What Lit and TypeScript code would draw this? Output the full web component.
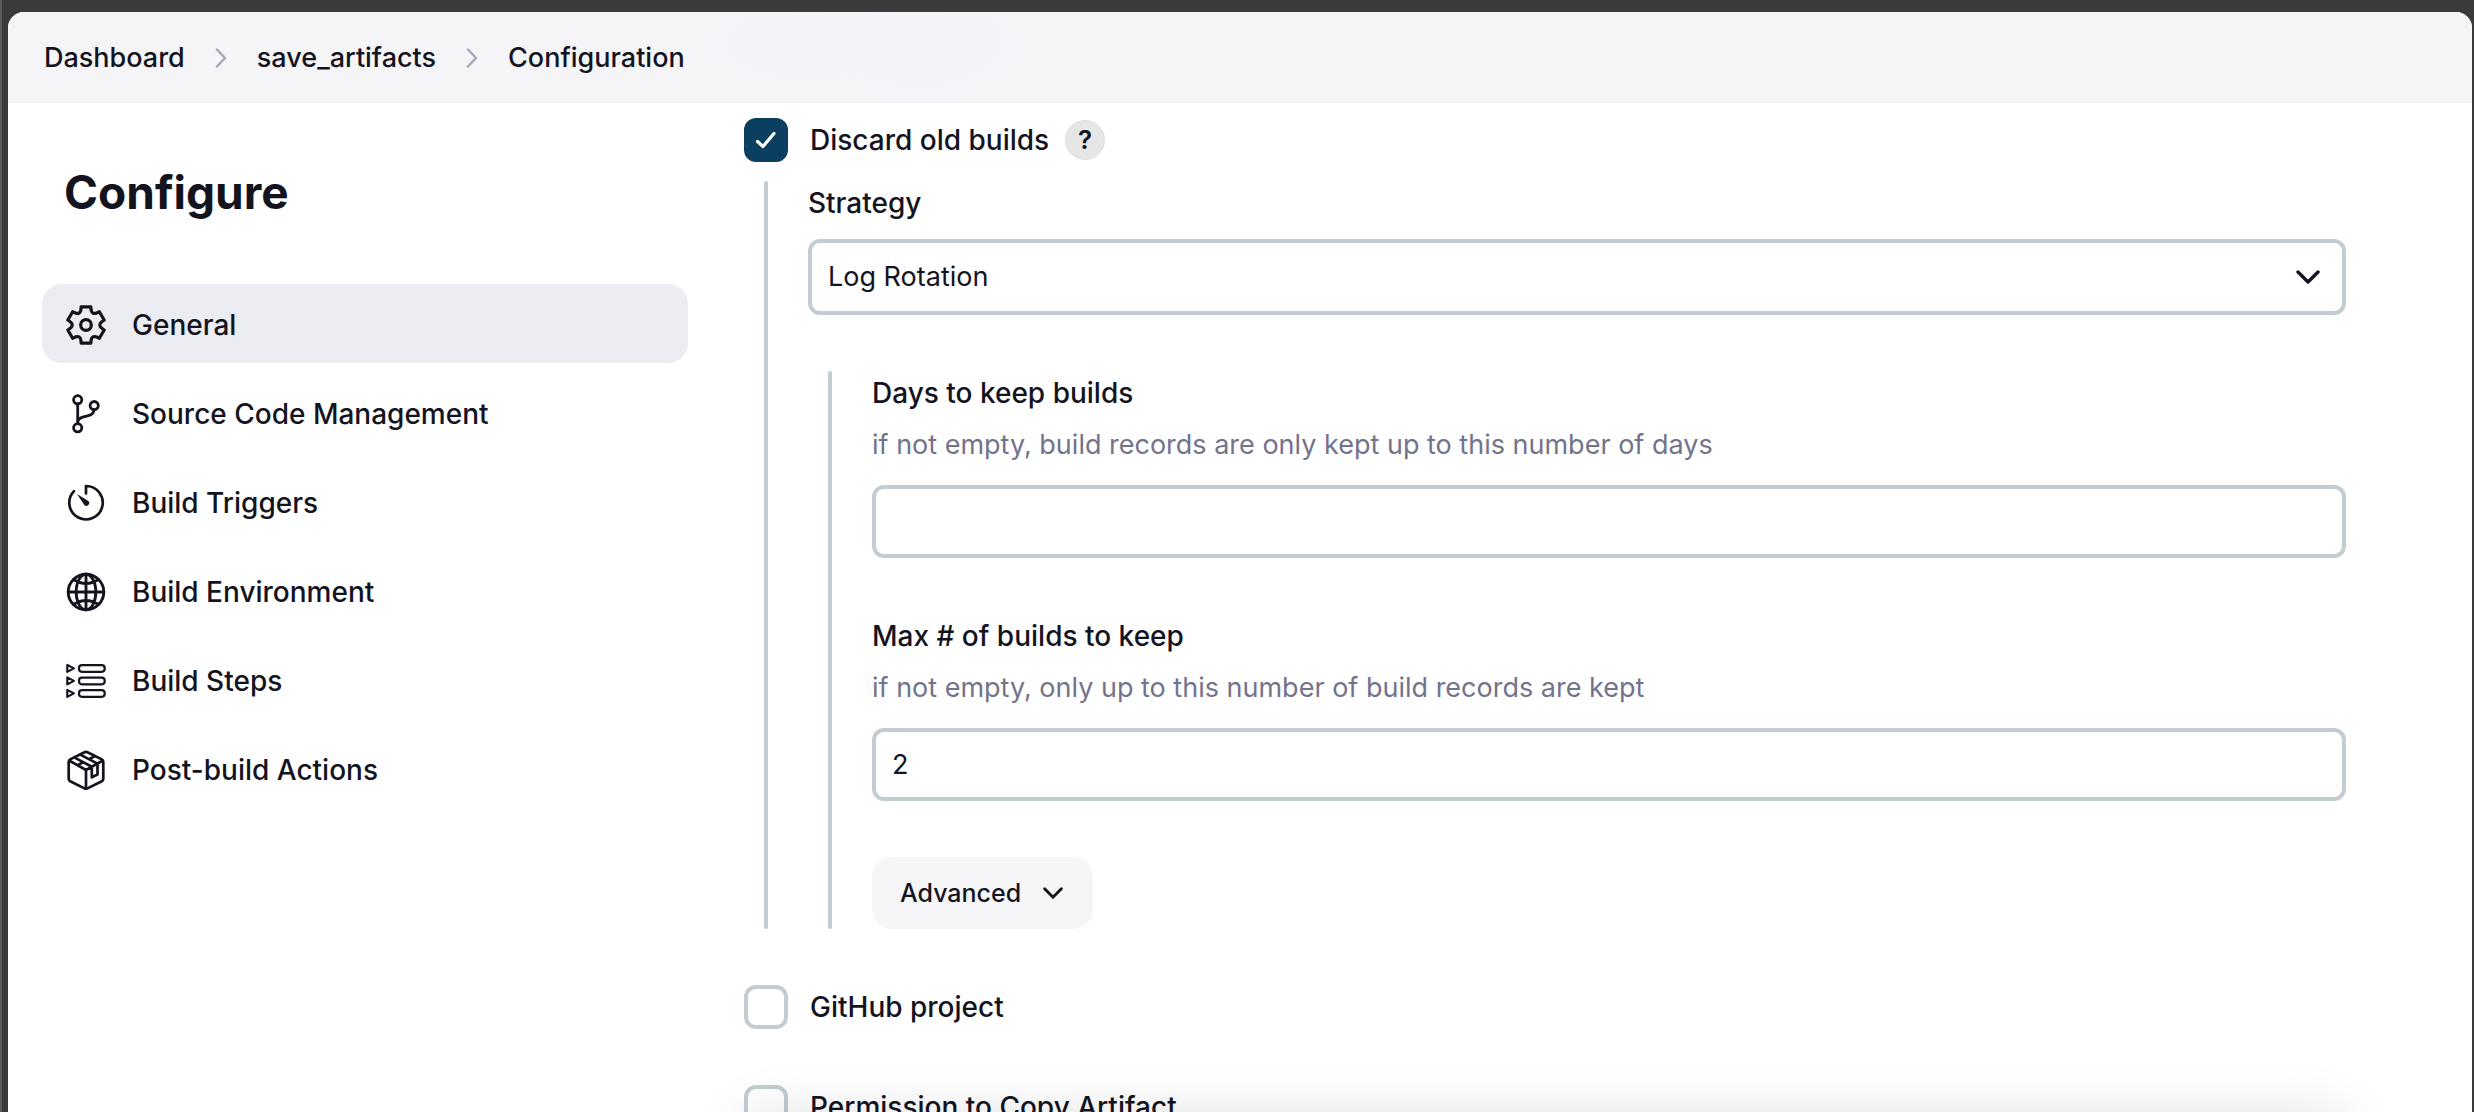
import { LitElement, html, css, svg } from "lit";
import { customElement, property, state } from "lit/decorators.js";

// Outline of a six-toothed gear centred on (20, 20).
const gearPath = (() => {
  const turn = (x: number, y: number, k: number) => {
    const a = (k * Math.PI) / 3;
    const px = 20 + x * Math.cos(a) - y * Math.sin(a);
    const py = 20 + x * Math.sin(a) + y * Math.cos(a);
    return `${px.toFixed(2)} ${py.toFixed(2)}`;
  };
  let d = "";
  for (let k = 0; k < 6; k++) {
    d += `${k ? "L" : "M"}${turn(-5.2, -14.6, k)}L${turn(-4.8, -18.2, k)}L${turn(4.8, -18.2, k)}L${turn(5.2, -14.6, k)}`;
    d += `Q${turn(6.2, -10.7, k)} ${turn(-5.2, -14.6, k + 1)}`;
  }
  return d + "Z";
})();

const icons = {
  gear: svg`<path d=${gearPath} stroke-width="3.2"/><circle cx="20" cy="20" r="5.3" stroke-width="3.2"/>`,
  branch: svg`<g stroke-width="2.8"><circle cx="11.7" cy="5.8" r="4.1"/><circle cx="11.7" cy="33.8" r="4.1"/><circle cx="28.2" cy="11.6" r="4.1"/><path d="M11.700 10v19.600M28 16c-.6 9-15.400 3.600-16.300 12"/></g>`,
  timer: svg`<path stroke-width="2.700" d="M20 10.500V3A16.700 16.700 0 1 1 8 8.100"/><path d="M11 11l11.300 7a2.700 2.700 0 1 1-4 4z" fill="currentColor" stroke="none"/>`,
  globe: svg`<g stroke-width="2.900"><circle cx="20" cy="20" r="17.800"/><ellipse cx="20" cy="20" rx="9.800" ry="17.800"/><path d="M20 2.200v35.600M2.200 20h35.600M7.500 7.500q12.500 8 25 0M7.500 32.500q12.500-8 25 0"/></g>`,
  steps: svg`<g stroke-width="2.200"><path d="M1.300 3.900v7l6.600-3.500zM1.300 16.400v7l6.600-3.500zM1.300 28.900v7l6.600-3.500z"/><rect x="13" y="4.200" width="25.700" height="6.600" rx="3"/><rect x="13" y="16.700" width="25.700" height="6.600" rx="3"/><rect x="13" y="29.200" width="25.700" height="6.600" rx="3"/></g>`,
  parcel: svg`<g stroke-width="2.700"><path d="M18.500 2.200q1.500-.8 3 0l14.300 7.200q1.500.8 1.500 2.500v16.800q0 1.700-1.500 2.500l-14.300 7.200q-1.500.8-3 0L4.200 31.200q-1.500-.8-1.500-2.500V11.900q0-1.700 1.500-2.500z"/><path d="M3.400 10.700L20 20l16.600-9.300M20 20v18M14.300 4.600l17.200 9v10.900l-5.700 2.800V16.800L8.700 7.600M11.500 15.300l5.700-3M23 9.200l5.700-3"/></g>`,
};
type IconName = keyof typeof icons;

const check = svg`<path d="M13.500 23.500l5.500 5 11-13" stroke-width="3.200"/>`;

@customElement("nav-entry")
class NavEntry extends LitElement {
  @property() icon: IconName = "gear";
  @property() label = "";
  @property({ type: Boolean }) active = false;

  static styles = css`
    :host {
      display: block;
    }
    .entry {
      display: flex;
      align-items: center;
      gap: 26px;
      width: 100%;
      height: 79px;
      padding: 2px 24px 0;
      border: 0;
      border-radius: 20px;
      background: transparent;
      color: #14141f;
      font: 500 28px/32px Inter, "Liberation Sans", sans-serif;
      text-align: left;
      white-space: nowrap;
    }
    .entry.active {
      background: #ecedf3;
    }
    .icon {
      flex: none;
      width: 40px;
      height: 40px;
      fill: none;
      stroke: currentColor;
      stroke-linecap: round;
      stroke-linejoin: round;
    }
  `;

  render() {
    return html`<button type="button" class="entry ${this.active ? "active" : ""}">
      <svg class="icon" viewBox="0 0 40 40" aria-hidden="true">${icons[this.icon]}</svg>
      <span>${this.label}</span>
    </button>`;
  }
}

@customElement("app-root")
class AppRoot extends LitElement {
  @state() private discard = true;

  private readonly crumbs = ["Dashboard", "save_artifacts", "Configuration"];
  private readonly sections: { icon: IconName; label: string }[] = [
    { icon: "gear", label: "General" },
    { icon: "branch", label: "Source Code Management" },
    { icon: "timer", label: "Build Triggers" },
    { icon: "globe", label: "Build Environment" },
    { icon: "steps", label: "Build Steps" },
    { icon: "parcel", label: "Post-build Actions" },
  ];

  static styles = css`
    * {
      box-sizing: border-box;
    }
    :host {
      display: flex;
      flex-direction: column;
      box-sizing: border-box;
      height: 100vh;
      padding: 12px 2px 0 6px;
      border-left: 2px solid #5c5c5e;
      overflow: hidden;
      background: #3a3a3a;
      color: #14141f;
      font: 500 28px/32px Inter, "Liberation Sans", sans-serif;
    }
    .window {
      position: relative;
      flex: 1;
      min-height: 0;
      overflow: hidden;
      border-radius: 16px 16px 0 0;
      background: #fff;
    }
    .crumbs {
      display: flex;
      align-items: center;
      gap: 30px;
      height: 91px;
      padding: 0 36px;
      background:
        radial-gradient(ellipse 110px 60px at 910px 30px, #f1f3f9, transparent),
        radial-gradient(ellipse 110px 50px at 800px 30px, #f3f2f8, transparent),
        #f5f5f8;
      font-size: 27px;
    }
    .crumbs a {
      color: inherit;
      text-decoration: none;
    }
    .crumb-sep {
      width: 12px;
      height: 20px;
      fill: none;
      stroke: #a9a9be;
      stroke-width: 2.5;
      stroke-linecap: round;
      stroke-linejoin: round;
    }
    .body {
      display: flex;
      gap: 56px;
      padding: 0 126px 0 34px;
    }
    .side {
      flex: none;
      width: 646px;
      padding-top: 61px;
    }
    .title {
      margin: 0 0 63px;
      padding-left: 22px;
      font-size: 46px;
      line-height: 57px;
      font-weight: 700;
    }
    .nav {
      display: flex;
      flex-direction: column;
      gap: 10px;
    }
    .form {
      flex: 1;
      min-width: 0;
      display: flex;
      flex-direction: column;
      gap: 56px;
      padding-top: 15px;
    }
    .option {
      display: flex;
      align-items: center;
      height: 44px;
    }
    .option label {
      display: flex;
      align-items: center;
      gap: 22px;
    }
    .tick {
      display: grid;
      width: 44px;
      height: 44px;
    }
    .tick > * {
      grid-area: 1 / 1;
    }
    .tick input {
      appearance: none;
      width: 44px;
      height: 44px;
      margin: 0;
      border: 4px solid #c3ccd1;
      border-radius: 12px;
      background: transparent;
    }
    .tick input:checked {
      border-color: #0b3f5f;
      background: #0b3f5f;
    }
    .mark {
      width: 44px;
      height: 44px;
      pointer-events: none;
      fill: none;
      stroke: #fff;
      stroke-linecap: round;
      stroke-linejoin: round;
    }
    .help {
      width: 40px;
      height: 40px;
      margin-left: 16px;
      padding: 0;
      border: 1px solid #dfdfdf;
      border-radius: 50%;
      background: #e6e6e6;
      color: inherit;
      font: 600 26px/38px Inter, "Liberation Sans", sans-serif;
    }
    .group {
      display: flex;
      flex-direction: column;
    }
    .nested {
      display: grid;
      grid-template-columns: 4px minmax(0, 1fr);
      gap: 40px;
      padding-left: 20px;
    }
    .group > .nested {
      margin-top: 19px;
    }
    .rule {
      border-radius: 2px;
      background: #c3ccd1;
    }
    .stack {
      display: flex;
      flex-direction: column;
      gap: 56px;
    }
    .field {
      display: flex;
      flex-direction: column;
      padding-top: 6px;
    }
    .hint {
      margin: 20px 0 0;
      color: #73738c;
      font-size: 27px;
      font-weight: 400;
    }
    .text {
      width: 100%;
      height: 73px;
      margin-top: 24px;
      padding: 0 16px;
      border: 4px solid #c3ccd1;
      border-radius: 12px;
      background: #fff;
      color: inherit;
      font: inherit;
      font-size: 27px;
      font-weight: 400;
    }
    .picker {
      display: grid;
      align-items: center;
      margin-top: 20px;
    }
    .picker > * {
      grid-area: 1 / 1;
    }
    .picker select {
      appearance: none;
      width: 100%;
      height: 76px;
      padding: 0 16px;
      border: 4px solid #c3ccd1;
      border-radius: 12px;
      background: #fff;
      color: inherit;
      font: inherit;
      font-size: 27px;
      font-weight: 400;
    }
    .chevron {
      width: 24px;
      height: 14px;
      fill: none;
      stroke: #14141f;
      stroke-width: 3.4;
      stroke-linecap: round;
      stroke-linejoin: round;
    }
    .picker .chevron {
      justify-self: end;
      margin-right: 26px;
      pointer-events: none;
    }
    .advanced {
      display: flex;
      align-self: flex-start;
      align-items: center;
      gap: 22px;
      height: 72px;
      padding: 0 30px 0 28px;
      border: 0;
      border-radius: 20px;
      background: #f6f6f9;
      color: inherit;
      font: inherit;
      font-size: 25px;
    }
    .advanced .chevron {
      width: 20px;
      height: 12px;
    }
    .dock {
      position: absolute;
      right: 126px;
      bottom: -86px;
      left: 736px;
      height: 80px;
      border-radius: 20px;
      box-shadow: 0 0 60px rgba(0, 0, 0, 0.14);
      pointer-events: none;
    }
  `;

  private chevron() {
    return html`<svg class="chevron" viewBox="0 0 24 14" aria-hidden="true"><path d="M2 2l10 10L22 2" /></svg>`;
  }

  private tick(id: string, checked = false) {
    return html`<span class="tick">
      <input
        type="checkbox"
        id=${id}
        .checked=${checked}
        @change=${(e: Event) => {
          if (id === "discard") this.discard = (e.target as HTMLInputElement).checked;
        }}
      />
      ${checked ? html`<svg class="mark" viewBox="0 0 44 44" aria-hidden="true">${check}</svg>` : null}
    </span>`;
  }

  private field(id: string, label: string, hint: string, value: string) {
    return html`<div class="field">
      <label for=${id}>${label}</label>
      <p class="hint" id="${id}-hint">${hint}</p>
      <input class="text" type="text" id=${id} aria-describedby="${id}-hint" .value=${value} />
    </div>`;
  }

  render() {
    return html`
      <div class="window">
        <nav class="crumbs" aria-label="Breadcrumb">
          ${this.crumbs.map(
            (c, i) => html`${i
                ? html`<svg class="crumb-sep" viewBox="0 0 12 20" aria-hidden="true"><path d="M2 1.500l8 8.500-8 8.500" /></svg>`
                : null}<a href="#">${c}</a>`
          )}
        </nav>
        <div class="body">
          <aside class="side">
            <h1 class="title">Configure</h1>
            <nav class="nav" aria-label="Sections">
              ${this.sections.map(
                (s, i) => html`<nav-entry .icon=${s.icon} .label=${s.label} .active=${i === 0}></nav-entry>`
              )}
            </nav>
          </aside>
          <main class="form">
            <div class="group">
              <div class="option">
                <label for="discard">${this.tick("discard", this.discard)}<span>Discard old builds</span></label>
                <button type="button" class="help" aria-label="Help for discarding old builds">?</button>
              </div>
              <div class="nested">
                <div class="rule"></div>
                <div class="stack">
                  <div class="field">
                    <label for="strategy">Strategy</label>
                    <div class="picker">
                      <select id="strategy">
                        <option>Log Rotation</option>
                      </select>
                      ${this.chevron()}
                    </div>
                  </div>
                  <div class="nested">
                    <div class="rule"></div>
                    <div class="stack">
                      ${this.field("days", "Days to keep builds", "if not empty, build records are only kept up to this number of days", "")}
                      ${this.field("max", "Max # of builds to keep", "if not empty, only up to this number of build records are kept", "2")}
                      <button type="button" class="advanced">Advanced ${this.chevron()}</button>
                    </div>
                  </div>
                </div>
              </div>
            </div>
            <div class="option">
              <label for="github">${this.tick("github")}<span>GitHub project</span></label>
            </div>
            <div class="option">
              <label for="permission">${this.tick("permission")}<span>Permission to Copy Artifact</span></label>
            </div>
          </main>
        </div>
        <div class="dock"></div>
      </div>
    `;
  }
}
